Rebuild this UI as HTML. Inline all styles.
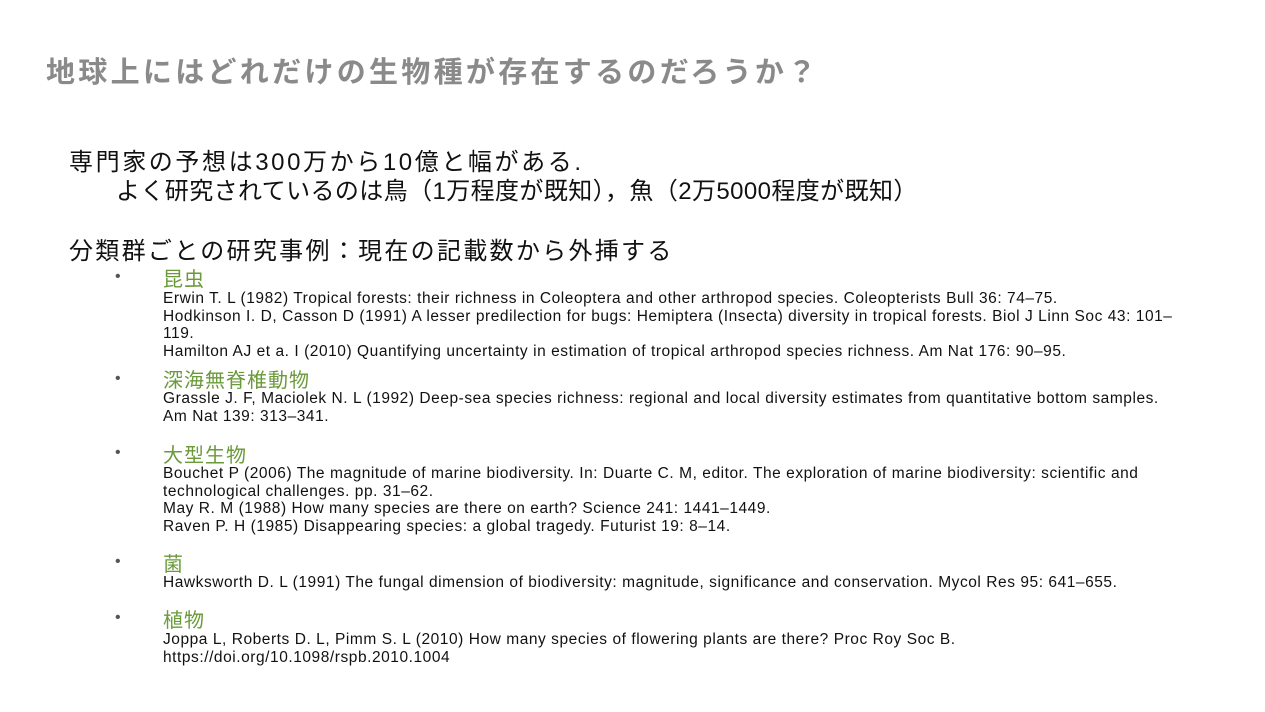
<!DOCTYPE html>
<html><head><meta charset="utf-8"><style>
body{margin:0;width:1265px;height:712px;background:#fff;position:relative;overflow:hidden;font-family:"Liberation Sans","Noto Sans CJK JP",sans-serif;}
div{position:absolute;white-space:nowrap;}
.t{left:46px;top:49px;font-size:29px;letter-spacing:3.3px;color:#8a8a8a;font-weight:bold;}
.h{font-size:24px;color:#111;}
.b{left:115px;font-size:16px;color:#555;}
.g{left:163px;font-size:20px;letter-spacing:1px;color:#6a9a3a;}
.r{left:163px;font-size:15.5px;letter-spacing:0.55px;color:#111;line-height:17.5px;}
</style></head><body>
<div class="t">地球上にはどれだけの生物種が存在するのだろうか？</div>
<div class="h" style="left:69px;top:142px;letter-spacing:2.6px">専門家の予想は300万から10億と幅がある.</div>
<div class="h" style="left:116px;top:171px;letter-spacing:0.4px">よく研究されているのは鳥（1万程度が既知），魚（2万5000程度が既知）</div>
<div class="h" style="left:69px;top:231px;letter-spacing:2.3px">分類群ごとの研究事例：現在の記載数から外挿する</div>

<div class="b" style="top:268px">•</div><div class="g" style="top:263px">昆虫</div>
<div class="r" style="top:290px">Erwin T. L (1982) Tropical forests: their richness in Coleoptera and other arthropod species. Coleopterists Bull 36: 74–75.<br>Hodkinson I. D, Casson D (1991) A lesser predilection for bugs: Hemiptera (Insecta) diversity in tropical forests. Biol J Linn Soc 43: 101–<br>119.<br>Hamilton AJ et a. I (2010) Quantifying uncertainty in estimation of tropical arthropod species richness. Am Nat 176: 90–95.</div>

<div class="b" style="top:370px">•</div><div class="g" style="top:364px">深海無脊椎動物</div>
<div class="r" style="top:390px">Grassle J. F, Maciolek N. L (1992) Deep-sea species richness: regional and local diversity estimates from quantitative bottom samples.<br>Am Nat 139: 313–341.</div>

<div class="b" style="top:444px">•</div><div class="g" style="top:439px">大型生物</div>
<div class="r" style="top:465px">Bouchet P (2006) The magnitude of marine biodiversity. In: Duarte C. M, editor. The exploration of marine biodiversity: scientific and<br>technological challenges. pp. 31–62.<br>May R. M (1988) How many species are there on earth? Science 241: 1441–1449.<br>Raven P. H (1985) Disappearing species: a global tragedy. Futurist 19: 8–14.</div>

<div class="b" style="top:553px">•</div><div class="g" style="top:548px">菌</div>
<div class="r" style="top:574px">Hawksworth D. L (1991) The fungal dimension of biodiversity: magnitude, significance and conservation. Mycol Res 95: 641–655.</div>

<div class="b" style="top:609px">•</div><div class="g" style="top:604px">植物</div>
<div class="r" style="top:631px">Joppa L, Roberts D. L, Pimm S. L (2010) How many species of flowering plants are there? Proc Roy Soc B.<br>https://doi.org/10.1098/rspb.2010.1004</div>
</body></html>
